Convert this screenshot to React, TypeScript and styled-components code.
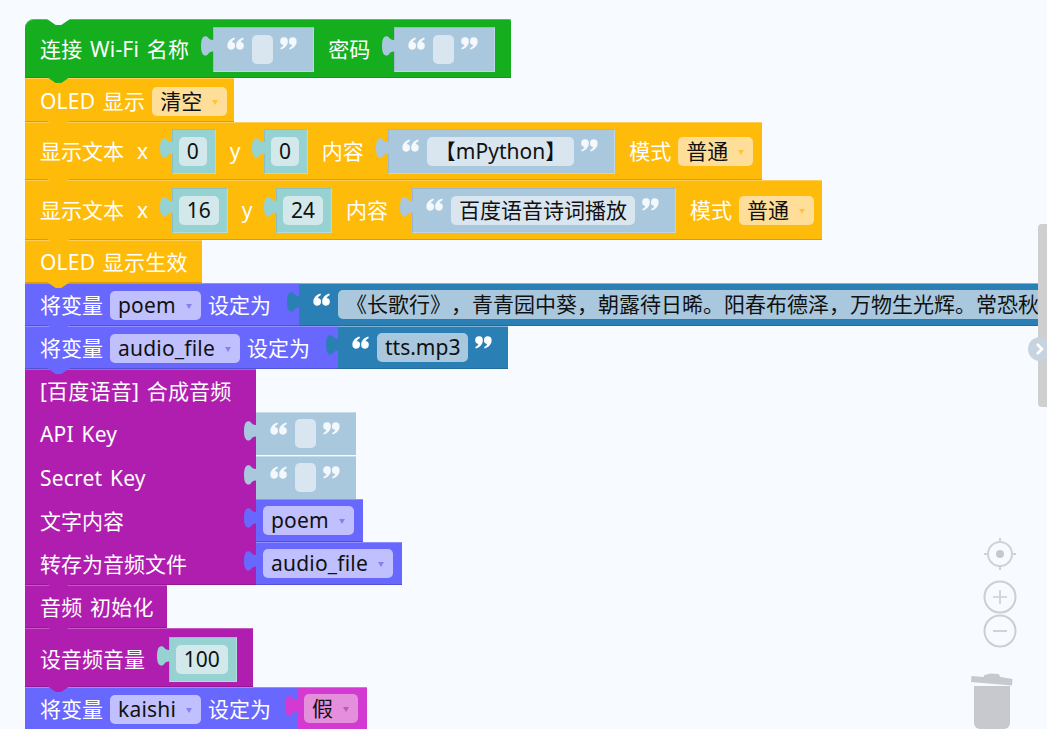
import styled, { createGlobalStyle } from "styled-components";

const POEM =
  "《长歌行》，青青园中葵，朝露待日晞。阳春布德泽，万物生光辉。常恐秋节至，焜黄华叶衰。百川东到海，何时复西归？";

const colors = {
  green: { bg: "#15ae1f", light: "#4cc653", dark: "#0f9a18" },
  orange: { bg: "#ffbb09", light: "#ffcf55", dark: "#d99e05" },
  violet: { bg: "#6868ff", light: "#8f8fff", dark: "#5252d8" },
  purple: { bg: "#b01eaf", light: "#c558c4", dark: "#941793" },
  pink: { bg: "#d33ad1", light: "#e06fde", dark: "#b42bb2" },
  deep: { bg: "#2a7fb5", light: "#7fb4d6", dark: "#226b9a" },
};

type Tone = keyof typeof colors;

const GlobalStyle = createGlobalStyle`
  html, body {
    margin: 0;
    padding: 0;
    background: #f7faff;
  }
  body {
    font-family: "Noto Sans", "Noto Sans CJK SC", sans-serif;
  }
`;

const Workspace = styled.div`
  position: relative;
  width: 1047px;
  height: 729px;
  overflow: hidden;
  background: #f7faff;
`;

const Stack = styled.div`
  display: flex;
  flex-direction: column;
  padding: 19px 0 0 25px;
`;

const Row = styled.div`
  display: flex;
`;

const Block = styled.div<{
  $tone: Tone;
  $w: number;
  $h: number;
  $pt?: number;
  $hat?: boolean;
}>`
  position: relative;
  flex: none;
  box-sizing: border-box;
  display: flex;
  align-items: center;
  gap: 7px;
  width: ${(p) => p.$w}px;
  height: ${(p) => p.$h}px;
  padding: ${(p) => p.$pt ?? 2}px 0 0 15px;
  background: ${(p) => colors[p.$tone].bg};
  box-shadow:
    inset 0 1px 0 ${(p) => colors[p.$tone].light},
    inset 0 -1px 0 ${(p) => colors[p.$tone].dark};
  border-radius: ${(p) => (p.$hat ? "9px 2px 0 0" : "0")};

  &::after {
    content: "";
    position: absolute;
    z-index: 2;
    left: 22px;
    bottom: -5px;
    width: 23px;
    height: 6px;
    background: ${(p) => colors[p.$tone].bg};
    clip-path: polygon(0 0, 100% 0, 62% 100%, 38% 100%);
    filter: drop-shadow(0 1px 0 ${(p) => colors[p.$tone].dark});
  }

  ${(p) =>
    p.$hat &&
    `&::before {
      content: "";
      position: absolute;
      left: 22px;
      top: 0;
      width: 23px;
      height: 6px;
      background: #f7faff;
      clip-path: polygon(0 0, 100% 0, 62% 100%, 38% 100%);
    }`}
`;

const Label = styled.span`
  flex: none;
  font-size: 21px;
  line-height: 29px;
  color: #fff;
  white-space: nowrap;

  & + & {
    margin-left: 6px;
  }
`;

const LatinLabel = styled(Label)`
  letter-spacing: 0.2px;
  word-spacing: 2px;
`;

const Socket = styled.div<{ $bg: string }>`
  position: relative;
  flex: none;
  display: flex;
  align-items: center;
  height: 45px;
  margin: 0 7px 0 17px;
  background: ${(p) => p.$bg};
  box-shadow:
    inset 1px 1px 0 rgba(0, 0, 0, 0.08),
    inset -1px -1px 0 rgba(255, 255, 255, 0.25);
`;

const NumberSocket = styled(Socket)`
  padding: 0 9px 0 7px;
`;

const TextSocket = styled(Socket)`
  padding: 0 17px 0 14px;
`;

const Value = styled.div<{ $tone?: Tone; $bg?: string }>`
  position: relative;
  flex: none;
  box-sizing: border-box;
  display: flex;
  align-items: center;
  height: 43px;
  padding: 0 9px 0 7px;
  background: ${(p) => (p.$tone ? colors[p.$tone].bg : p.$bg)};
  box-shadow: ${(p) =>
    p.$tone
      ? `inset 0 1px 0 ${colors[p.$tone].light}, inset 0 -1px 0 ${colors[p.$tone].dark}`
      : "inset 0 1px 0 rgba(255,255,255,.35)"};
`;

const StringValue = styled(Value)`
  padding: 0 16px 0 14px;
`;

const Field = styled.span<{ $bg: string }>`
  box-sizing: border-box;
  display: inline-flex;
  align-items: center;
  justify-content: center;
  height: 29px;
  min-width: 21px;
  padding: 0 8px;
  border-radius: 5px;
  background: ${(p) => p.$bg};
  color: #111;
  font-size: 21px;
  line-height: 29px;
  white-space: nowrap;
  text-spacing-trim: space-all;
`;

const NumberField = styled(Field)`
  padding: 0 7.75px;
`;

const Dropdown = styled(Field)`
  flex: none;
  justify-content: flex-start;
  gap: 10px;
  padding: 0 9px 0 8px;
`;

const VarDropdown = styled(Dropdown)`
  letter-spacing: 0.2px;
`;

const Arrow = styled.i<{ $color: string }>`
  display: block;
  width: 0;
  height: 0;
  margin-top: 2px;
  border-style: solid;
  border-width: 5px 3px 0;
  border-color: ${(p) => p.$color} transparent transparent;
`;

const QuoteMark = styled.svg<{ $flip?: boolean }>`
  flex: none;
  align-self: flex-start;
  width: 17px;
  height: 13px;
  margin: 10px ${(p) => (p.$flip ? "0 0 7px" : "8px 0 0")};
  transform: ${(p) => (p.$flip ? "rotate(180deg)" : "none")};
`;

const TabShape = styled.svg`
  position: absolute;
  left: -12px;
  top: 0;
  width: 13px;
  height: 37px;
`;

const LabelCell = styled.div<{ $h: number }>`
  flex: none;
  box-sizing: border-box;
  display: flex;
  align-items: center;
  width: 231px;
  height: ${(p) => p.$h}px;
  padding: 1px 0 0 15px;
  background: ${colors.purple.bg};
`;

const SpeechBlock = styled.div`
  position: relative;
  display: flex;
  flex-direction: column;
  width: 231px;

  ${Row}:first-child ${LabelCell} {
    box-shadow: inset 0 1px 0 ${colors.purple.light};
  }

  ${Row}:last-child ${LabelCell} {
    box-shadow: inset 0 -1px 0 ${colors.purple.dark};
  }

  &::after {
    content: "";
    position: absolute;
    z-index: 2;
    left: 22px;
    bottom: -5px;
    width: 23px;
    height: 6px;
    background: ${colors.purple.bg};
    clip-path: polygon(0 0, 100% 0, 62% 100%, 38% 100%);
    filter: drop-shadow(0 1px 0 ${colors.purple.dark});
  }
`;

const Scrollbar = styled.div`
  position: absolute;
  top: 224px;
  right: 0;
  width: 9px;
  height: 183px;
  border-radius: 4px 0 0 4px;
  background: #cfcfcf;
`;

const ScrollHandle = styled.div`
  position: absolute;
  left: -10px;
  top: 113px;
  width: 24px;
  height: 24px;
  display: flex;
  align-items: center;
  justify-content: center;
  border-radius: 50%;
  background: #c8d3e0;
`;

const Controls = styled.div`
  position: absolute;
  top: 537px;
  left: 971px;
  width: 58px;
  display: flex;
  flex-direction: column;
`;

const ControlIcon = styled.svg<{ $mb: number }>`
  display: block;
  width: 34px;
  height: 34px;
  margin: 0 0 ${(p) => p.$mb}px 12px;
`;

const Trash = styled.svg`
  display: block;
  width: 42px;
  height: 58px;
`;

function Tab({ color }: { color: string }) {
  return (
    <TabShape viewBox="0 0 13 37">
      <path
        d="M13 13H11.5C9.5 13 8 12 7 10.5C5.8 8.8 3.2 8.8 1.8 10.5C.5 12.2 0 15.5 0 19C0 22.5.5 25.8 1.8 27.3C3.2 29 5.8 29 7 27.3C8 25.5 9.5 24.5 11.5 24.5H13Z"
        fill={color}
      />
    </TabShape>
  );
}

function Quote({ flip, color = "#f4f8fb" }: { flip?: boolean; color?: string }) {
  return (
    <QuoteMark $flip={flip} viewBox="0 0 17 13">
      <path
        d="M7.4 .6C3.4 1.9 .4 4.8 .4 8.6a3.8 3.8 0 1 0 4.4-3.5C5.2 3.7 6.3 2.7 8 1.9Z"
        fill={color}
      />
      <path
        d="M16.2 .6C12.2 1.9 9.2 4.8 9.2 8.6a3.8 3.8 0 1 0 4.4-3.5C14 3.7 15.1 2.7 16.8 1.9Z"
        fill={color}
      />
    </QuoteMark>
  );
}

const TEXT_BG = "#a9c8de";
const TEXT_FIELD = "#d9e6f0";
const NUM_BG = "#97d2d2";
const NUM_FIELD = "#d2e8ea";
const GOLD_FIELD = "#ffde99";
const GOLD_ARROW = "#ffc634";
const LILAC_FIELD = "#c0c0ff";
const LILAC_ARROW = "#8282f2";

function TextInput({ value }: { value?: string }) {
  return (
    <TextSocket $bg={TEXT_BG}>
      <Tab color={TEXT_BG} />
      <Quote />
      <Field $bg={TEXT_FIELD}>{value}</Field>
      <Quote flip />
    </TextSocket>
  );
}

function NumberInput({ value }: { value: string }) {
  return (
    <NumberSocket $bg={NUM_BG}>
      <Tab color={NUM_BG} />
      <NumberField $bg={NUM_FIELD}>{value}</NumberField>
    </NumberSocket>
  );
}

function GoldSelect({ value }: { value: string }) {
  return (
    <Dropdown $bg={GOLD_FIELD}>
      {value}
      <Arrow $color={GOLD_ARROW} />
    </Dropdown>
  );
}

function VarSelect({ value }: { value: string }) {
  return (
    <VarDropdown $bg={LILAC_FIELD}>
      {value}
      <Arrow $color={LILAC_ARROW} />
    </VarDropdown>
  );
}

function EmptyString() {
  return (
    <StringValue $bg={TEXT_BG}>
      <Tab color={TEXT_BG} />
      <Quote />
      <Field $bg={TEXT_FIELD} />
      <Quote flip />
    </StringValue>
  );
}

export default function App() {
  return (
    <Workspace>
      <GlobalStyle />
      <Stack>
        <Block $tone="green" $w={486} $h={59} $hat>
          <LatinLabel>连接 Wi-Fi 名称</LatinLabel>
          <TextInput />
          <Label>密码</Label>
          <TextInput />
        </Block>
        <Block $tone="orange" $w={209} $h={44} $pt={3}>
          <LatinLabel>OLED 显示</LatinLabel>
          <GoldSelect value="清空" />
        </Block>
        <Block $tone="orange" $w={737} $h={58} $pt={1}>
          <Label>显示文本</Label>
          <Label>x</Label>
          <NumberInput value="0" />
          <Label>y</Label>
          <NumberInput value="0" />
          <Label>内容</Label>
          <TextInput value="【mPython】" />
          <Label>模式</Label>
          <GoldSelect value="普通" />
        </Block>
        <Block $tone="orange" $w={797} $h={60} $pt={0}>
          <Label>显示文本</Label>
          <Label>x</Label>
          <NumberInput value="16" />
          <Label>y</Label>
          <NumberInput value="24" />
          <Label>内容</Label>
          <TextInput value="百度语音诗词播放" />
          <Label>模式</Label>
          <GoldSelect value="普通" />
        </Block>
        <Block $tone="orange" $w={177} $h={43}>
          <LatinLabel>OLED 显示生效</LatinLabel>
        </Block>
        <Row>
          <Block $tone="violet" $w={274} $h={43}>
            <Label>将变量</Label>
            <VarSelect value="poem" />
            <Label>设定为</Label>
          </Block>
          <StringValue $tone="deep">
            <Tab color={colors.deep.bg} />
            <Quote color="#fff" />
            <Field $bg={TEXT_BG}>{POEM}</Field>
          </StringValue>
        </Row>
        <Row>
          <Block $tone="violet" $w={313} $h={43}>
            <Label>将变量</Label>
            <VarSelect value="audio_file" />
            <Label>设定为</Label>
          </Block>
          <StringValue $tone="deep">
            <Tab color={colors.deep.bg} />
            <Quote color="#fff" />
            <Field $bg={TEXT_BG}>tts.mp3</Field>
            <Quote flip color="#fff" />
          </StringValue>
        </Row>
        <SpeechBlock>
          <Row>
            <LabelCell $h={43}>
              <LatinLabel>[百度语音] 合成音频</LatinLabel>
            </LabelCell>
          </Row>
          <Row>
            <LabelCell $h={44}>
              <LatinLabel>API Key</LatinLabel>
            </LabelCell>
            <EmptyString />
          </Row>
          <Row>
            <LabelCell $h={43}>
              <LatinLabel>Secret Key</LatinLabel>
            </LabelCell>
            <EmptyString />
          </Row>
          <Row>
            <LabelCell $h={43}>
              <Label>文字内容</Label>
            </LabelCell>
            <Value $tone="violet">
              <Tab color={colors.violet.bg} />
              <VarSelect value="poem" />
            </Value>
          </Row>
          <Row>
            <LabelCell $h={43}>
              <Label>转存为音频文件</Label>
            </LabelCell>
            <Value $tone="violet">
              <Tab color={colors.violet.bg} />
              <VarSelect value="audio_file" />
            </Value>
          </Row>
        </SpeechBlock>
        <Block $tone="purple" $w={142} $h={43}>
          <LatinLabel>音频 初始化</LatinLabel>
        </Block>
        <Block $tone="purple" $w={228} $h={59} $pt={3}>
          <Label>设音频音量</Label>
          <NumberInput value="100" />
        </Block>
        <Row>
          <Block $tone="violet" $w={272} $h={43}>
            <Label>将变量</Label>
            <VarSelect value="kaishi" />
            <Label>设定为</Label>
          </Block>
          <Value $tone="pink">
            <Tab color={colors.pink.bg} />
            <Dropdown $bg="#e38fdc">
              假
              <Arrow $color="#c84fc6" />
            </Dropdown>
          </Value>
        </Row>
      </Stack>

      <Scrollbar>
        <ScrollHandle>
          <svg width="12" height="14" viewBox="0 0 12 14">
            <path d="M3 2l5 5-5 5" fill="none" stroke="#fff" strokeWidth="2.6" />
          </svg>
        </ScrollHandle>
      </Scrollbar>

      <Controls>
        <ControlIcon $mb={9} viewBox="0 0 34 34">
          <circle cx="17" cy="17" r="12" fill="none" stroke="#d0d2d8" strokeWidth="2" />
          <circle cx="17" cy="17" r="4" fill="#c6c8ce" />
          <path d="M17 1v4M17 29v4M1 17h4M29 17h4" stroke="#d0d2d8" strokeWidth="2" />
        </ControlIcon>
        <ControlIcon $mb={0} viewBox="0 0 34 34">
          <circle cx="17" cy="17" r="15.5" fill="none" stroke="#ccced4" strokeWidth="2" />
          <path d="M10 17h14M17 10v14" stroke="#ccced4" strokeWidth="1.6" />
        </ControlIcon>
        <ControlIcon $mb={24} viewBox="0 0 34 34">
          <circle cx="17" cy="17" r="15.5" fill="none" stroke="#ccced4" strokeWidth="2" />
          <path d="M10 17h14" stroke="#ccced4" strokeWidth="1.8" />
        </ControlIcon>
        <Trash viewBox="0 0 42 58">
          <path d="M.5 4l12 1 1-2 6-1.5 8 .5 2 3 12 2-.5 6.5L0 10Z" fill="#c7c9cf" />
          <path d="M3 14h36v37a6 6 0 0 1-6 6H9a6 6 0 0 1-6-6Z" fill="#c7c9cf" />
        </Trash>
      </Controls>
    </Workspace>
  );
}
